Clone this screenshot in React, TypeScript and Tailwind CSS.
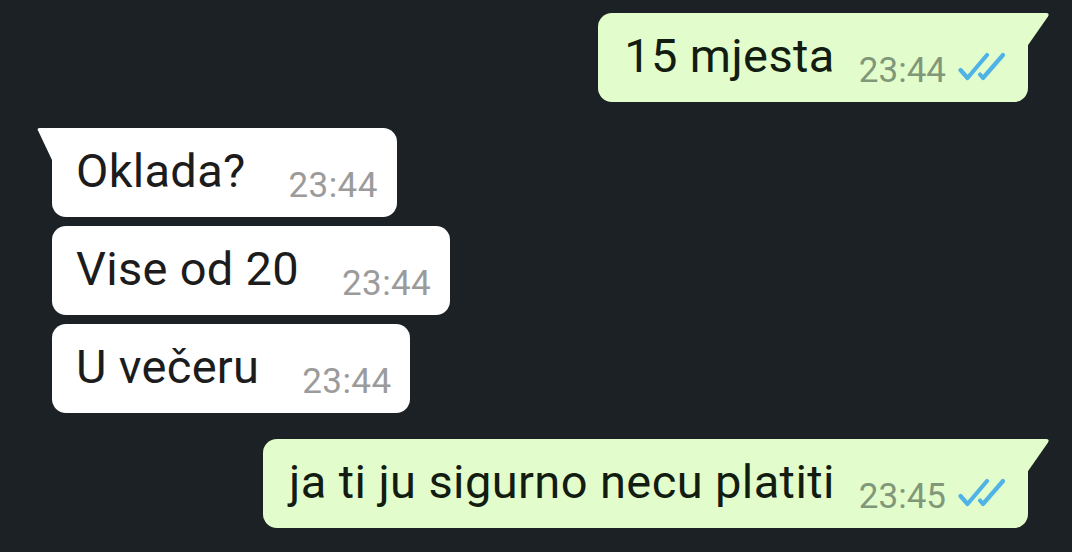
function Ticks() {
  return (
    <svg width="48" height="30" viewBox="0 0 48 30" className="ml-[12px] mt-[39px] shrink-0">
      <path d="M2.5 18 L9.5 26 L29 3" fill="none" stroke="#4fb3e6" strokeWidth="4.2" strokeLinecap="round" strokeLinejoin="round" />
      <path d="M22 22.5 L25 26 L45 3" fill="none" stroke="#4fb3e6" strokeWidth="4.2" strokeLinecap="round" strokeLinejoin="round" />
    </svg>
  );
}

function Outgoing({ text, time }: { text: string; time: string }) {
  return (
    <div className="relative flex items-start h-[89px] self-end mr-[44px] bg-[#e2fdcb] rounded-[14px] rounded-tr-none pl-[26px] pr-[22px]">
      <span className="pt-[19px] text-[47px] leading-[47px] tracking-[0.4px] text-[#121c10] whitespace-nowrap">{text}</span>
      <span className="ml-[24px] pt-[40px] text-[35px] leading-[35px] text-[#80977a] whitespace-nowrap">{time}</span>
      <Ticks />
      <svg width="24" height="36" viewBox="0 0 24 36" className="absolute top-0 right-[-22px]">
        <path d="M0 0 H20 Q24 0 22 3.5 L0 35 Z" fill="#e2fdcb" />
      </svg>
    </div>
  );
}

function Incoming({ text, time, first }: { text: string; time: string; first?: boolean }) {
  return (
    <div
      className={
        first
          ? "relative flex items-start h-[89px] self-start ml-[52px] bg-white rounded-[14px] rounded-tl-none pl-[24px] pr-[19px]"
          : "relative flex items-start h-[89px] self-start ml-[52px] bg-white rounded-[14px] pl-[24px] pr-[19px]"
      }
    >
      <span className="pt-[19px] text-[47px] leading-[47px] tracking-[0.3px] text-[#1c1c1c] whitespace-nowrap">{text}</span>
      <span className="ml-[43px] pt-[40px] text-[35px] leading-[35px] tracking-[0.4px] text-[#9b9b9b] whitespace-nowrap">{time}</span>
      {first && (
        <svg width="22" height="36" viewBox="0 0 22 36" className="absolute top-0 left-[-22px]">
          <path d="M22 0 H10 Q6 0 8.5 3.5 L22 32 Z" fill="#ffffff" />
        </svg>
      )}
    </div>
  );
}

export default function App() {
  return (
    <div className="w-[1072px] h-[552px] overflow-hidden bg-[#1b2124] flex flex-col pt-[13px] font-['Roboto',_'Liberation_Sans',_sans-serif]">
      <Outgoing text="15 mjesta" time="23:44" />
      <div className="flex flex-col gap-[9px] mt-[26px]">
        <Incoming first text="Oklada?" time="23:44" />
        <Incoming text="Vise od 20" time="23:44" />
        <Incoming text="U večeru" time="23:44" />
      </div>
      <div className="flex flex-col mt-[26px]">
        <Outgoing text="ja ti ju sigurno necu platiti" time="23:45" />
      </div>
    </div>
  );
}
